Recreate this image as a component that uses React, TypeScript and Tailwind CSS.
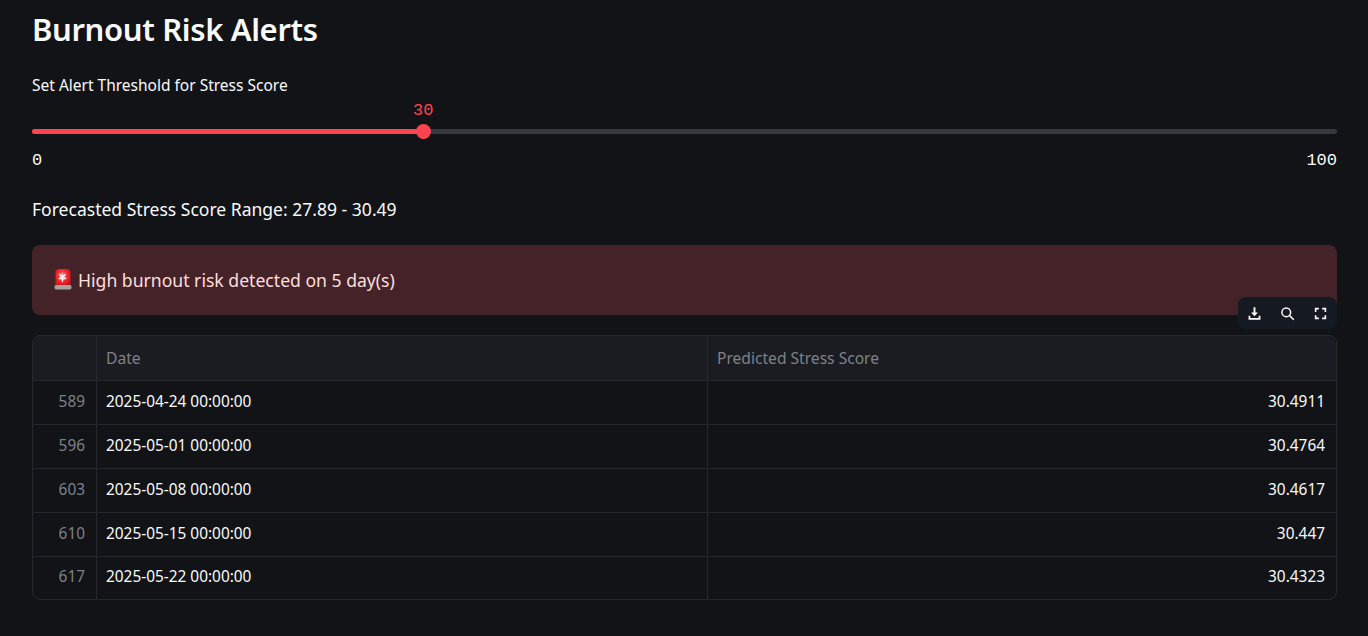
const rows = [
  { id: 589, date: "2025-04-24 00:00:00", score: "30.4911" },
  { id: 596, date: "2025-05-01 00:00:00", score: "30.4764" },
  { id: 603, date: "2025-05-08 00:00:00", score: "30.4617" },
  { id: 610, date: "2025-05-15 00:00:00", score: "30.447" },
  { id: 617, date: "2025-05-22 00:00:00", score: "30.4323" },
];

function Siren() {
  return (
    <svg width="20" height="22" viewBox="0 0 20 22" className="mb-[2px] shrink-0">
      <defs>
        <radialGradient id="glow" cx="0.45" cy="0.4" r="0.65">
          <stop offset="0" stopColor="#ff7a7a" />
          <stop offset="0.6" stopColor="#ee2228" />
          <stop offset="1" stopColor="#c91218" />
        </radialGradient>
      </defs>
      <path d="M3.5 18V4.5a3.5 3.5 0 0 1 3.5-3.5h8a3.5 3.5 0 0 1 3.5 3.5V18z" fill="url(#glow)" />
      <path d="M10 3.5l1 3.5 3.5-1.5-2 3.500 2.500 2-3.500 0.500-1 3.500-1-3.500-3.500-0.500 2.500-2-2-3.500 3.500 1.500z" fill="#ffe9e9" />
      <rect x="2.500" y="17" width="17" height="4.500" rx="1.800" fill="#a3a3a0" />
    </svg>
  );
}

function DownloadIcon() {
  return (
    <svg width="15" height="15" viewBox="0 0 24 24" fill="currentColor">
      <path d="M10.500 2h3v8.500h4L12 16.500l-5.500-6h4z" />
      <path d="M2.500 15.500h2.800V19h13.400v-3.500h2.800V22H2.500z" />
    </svg>
  );
}

function SearchIcon() {
  return (
    <svg width="15" height="15" viewBox="0 0 24 24" fill="none" stroke="currentColor" strokeWidth="2.400">
      <circle cx="10" cy="10" r="7" />
      <path d="M15 15l7 7" />
    </svg>
  );
}

function FullscreenIcon() {
  return (
    <svg width="13" height="13" viewBox="0 0 24 24" fill="none" stroke="currentColor" strokeWidth="3">
      <path d="M3 9V3h6M15 3h6v6M21 15v6h-6M9 21H3v-6" />
    </svg>
  );
}

export default function App() {
  return (
    <div className="min-h-[636px] bg-[#111317] pl-8 pr-[31px] font-['Noto_Sans',sans-serif] text-white">
      <h1 className="pt-[8px] text-[31px] leading-[42px] font-semibold tracking-[-0.35px] text-[#fafafa]">
        Burnout Risk Alerts
      </h1>

      <p className="mt-[25px] text-[15.5px] leading-[20px] text-[#fafafa]">
        Set Alert Threshold for Stress Score
      </p>

      <div className="mt-[6px] font-['Liberation_Mono',monospace] text-[17px] leading-[20px]">
        <div className="relative h-[20px]">
          <span className="absolute left-[381px] top-0 text-[#ff4350]">30</span>
        </div>
        <div className="relative mt-[8px] h-[5px] rounded-full bg-[#363740]">
          <div className="h-full w-[391px] rounded-full bg-[#ff4350]" />
          <div className="absolute left-[384px] top-[-5px] h-[15px] w-[15px] rounded-full bg-[#ff4350]" />
        </div>
        <div className="mt-[17px] flex justify-between text-[#fafafa]">
          <span>0</span>
          <span>100</span>
        </div>
      </div>

      <p className="mt-[26px] text-[17.55px] leading-[24px] text-[#fafafa]">
        Forecasted Stress Score Range: 27.89 - 30.49
      </p>

      <div className="mt-[24px] flex h-[70px] items-center gap-[6px] rounded-lg bg-[#432328] px-5 text-[17.6px] text-[#ffdede]">
        <Siren />
        <span>High burnout risk detected on 5 day(s)</span>
      </div>

      <div className="relative mt-[20px] text-[15.4px]">
        <div className="absolute right-0 top-[-38px] grid h-[32px] w-[99px] grid-cols-3 place-items-center rounded-lg bg-[#151922] text-[#fafafa]">
          <DownloadIcon />
          <SearchIcon />
          <FullscreenIcon />
        </div>

        <div className="overflow-hidden rounded-lg border border-[#26282e]">
          <div className="grid h-[45px] grid-cols-[64px_611px_1fr] border-b border-[#26282e] bg-[#1a1c21] text-[15.6px] text-[#7f8187]">
            <div className="border-r border-[#26282e]" />
            <div className="flex items-center border-r border-[#26282e] px-[9px] pt-[2px]">Date</div>
            <div className="flex items-center px-[9px] pt-[2px]">Predicted Stress Score</div>
          </div>
          {rows.map((row, i) => (
            <div
              key={row.id}
              className={
                i < rows.length - 1
                  ? "grid h-[44px] grid-cols-[64px_611px_1fr] border-b border-[#26282e]"
                  : "grid h-[42px] grid-cols-[64px_611px_1fr]"
              }
            >
              <div className="flex items-center justify-end border-r border-[#26282e] pr-[11px] pb-[2px] text-[#7f8187]">
                {row.id}
              </div>
              <div className="flex items-center border-r border-[#26282e] px-[9px] pb-[2px] text-[#fafafa]">{row.date}</div>
              <div className="flex items-center justify-end pr-[11px] pb-[2px] text-[#fafafa]">{row.score}</div>
            </div>
          ))}
        </div>
      </div>
    </div>
  );
}
